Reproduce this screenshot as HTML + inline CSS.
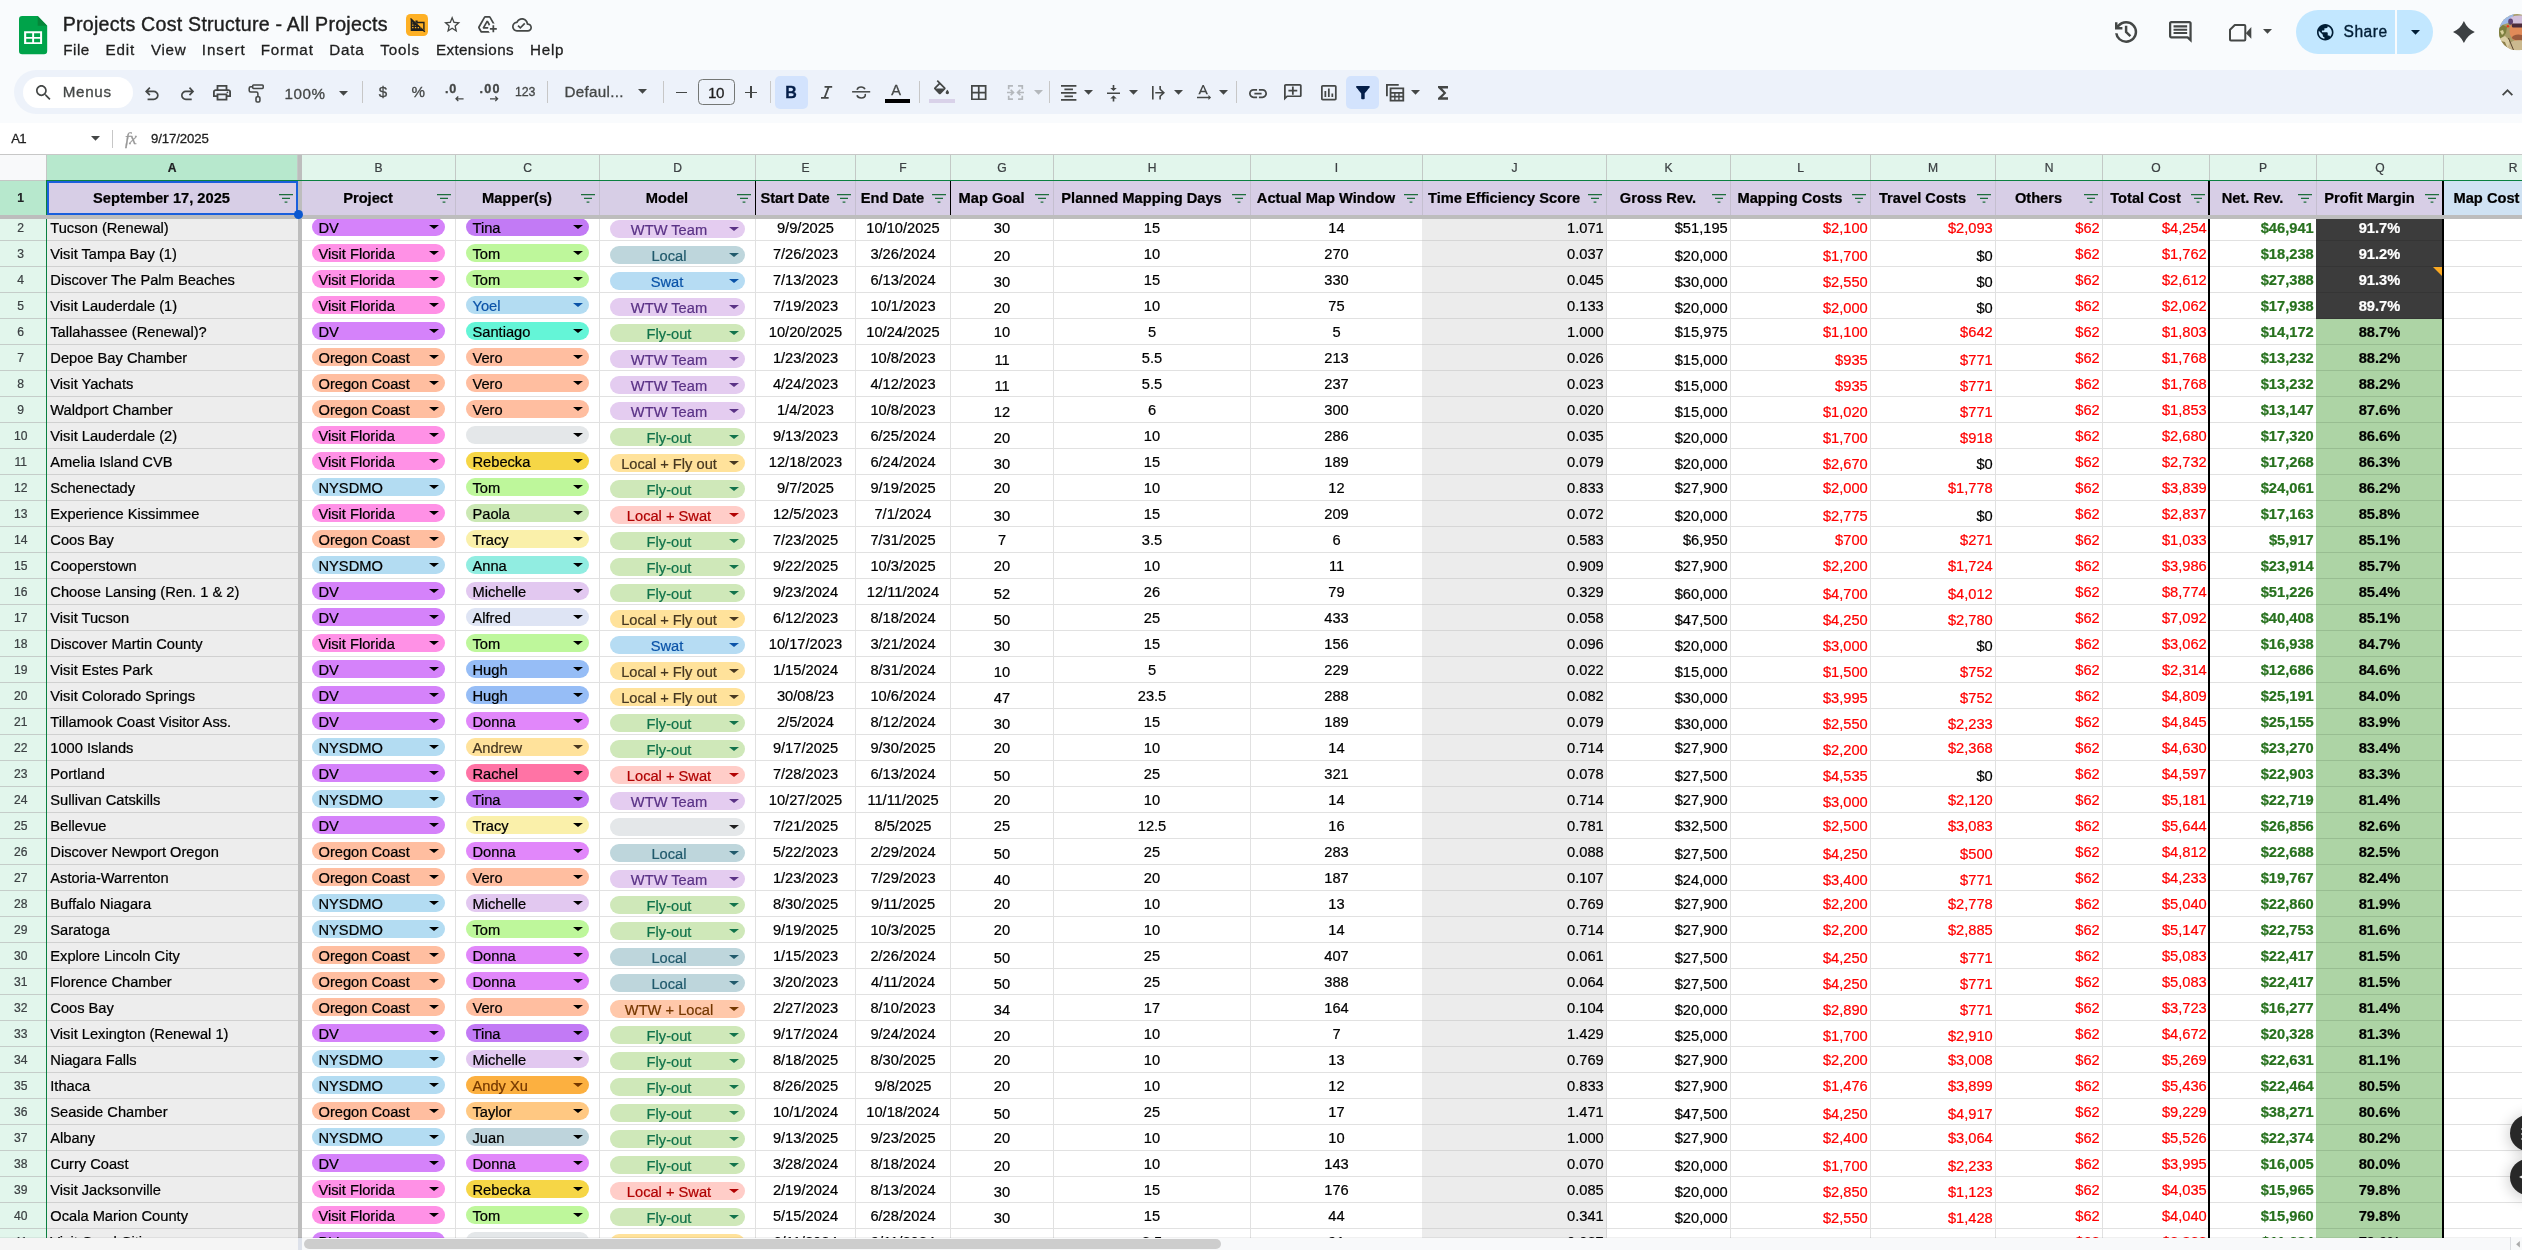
<!DOCTYPE html>
<html lang="en"><head><meta charset="utf-8"><title>Projects Cost Structure - All Projects - Google Sheets</title>
<style>
*{box-sizing:border-box}
html,body{margin:0;padding:0}
body{width:2522px;height:1250px;overflow:hidden;background:#f9fbfd;font-family:"Liberation Sans",Arial,sans-serif;color:#000}
#app{position:absolute;left:0;top:0;width:2522px;height:1250px;overflow:hidden;will-change:transform}
#grid{-webkit-text-stroke:.22px;position:absolute;left:0;top:0;width:2522px;height:1238px;overflow:hidden;clip-path:inset(154px 0 0 0);background:#fff}
.corner{position:absolute;left:0;top:155px;width:47px;height:26px;background:#f8f9fa;border-right:1px solid #c4c7c5;border-bottom:1px solid #c4c7c5}
.ch{position:absolute;top:155px;height:25px;background:#e2f6ec;border-right:1px solid #c3c9c6;font-size:12.1px;line-height:25px;text-align:center;color:#3c4043;padding-top:.5px}
.ch.sel{background:#b7e8cd;font-weight:bold;color:#202124}
.r1{position:absolute;left:0;top:181px;width:2522px;height:34px}
.r{position:absolute;left:0;width:2522px;height:26px;font-size:14.667px;line-height:25px;white-space:nowrap}
.rh{position:absolute;left:-4.6px;top:0;width:50.6px;height:100%;background:#e2f6ec;border-bottom:1px solid #c5cdc9;font-size:12.1px;text-align:center;color:#3c4043;line-height:27px}
.rh.sel{background:#b7e8cd;color:#202124;border-bottom:none}
.c{position:absolute;top:0;height:26px;border-right:1px solid #e1e1e1;border-bottom:1px solid #e1e1e1;background:#fff;padding:1px 3.3px 0}
.h{position:absolute;top:0;height:34px;background:#d7cee6;border-right:1px solid #c5bfd0;font-size:14.667px;font-weight:bold;line-height:34px;white-space:nowrap}
.h.hr{background:#cfe2f3}
.ht{position:absolute;left:0;right:21px;top:0;text-align:center}
.fi{position:absolute;right:4px;top:12.7px;width:14px;height:9px}
.c.cA{background:#ededed;border-bottom-color:#d0d0d0;border-right:none;overflow:hidden}
.c.cJ{background:#ececec;border-bottom-color:#d6d6d6;border-right-color:#d6d6d6}
.ce{text-align:center}
.c.ri{text-align:right;padding-right:2.3px}
.c.lo{padding-top:3.25px}
.red{color:#ff0000}
.m0{color:#000}
.grn{color:#27711e;font-weight:bold}
.c.cQ{background:#add4a5;font-weight:bold;border-bottom-color:#98bd91;border-right:none}
.c.cQ.dk{background:#3c3c3c;color:#fff;border-bottom-color:#353535}
.note{position:absolute;right:1px;top:0;width:0;height:0;border-left:9px solid transparent;border-top:9px solid #fba922}
.chip{position:absolute;left:10px;right:10px;top:2.85px;height:18.1px;border-radius:9.05px;line-height:18px;padding:1.2px 0 0 6.5px;color:#000}
.chip::after{content:"";position:absolute;right:6.4px;top:6.7px;border-left:5px solid transparent;border-right:5px solid transparent;border-top:4.9px solid currentColor}
.chip.cd{top:4.9px;text-align:center;padding:1px 17px 0 0}
.chip.cd::after{top:7.1px}
.pdv{background:#d582fa}.pvf{background:#ff91e6}.poc{background:#ffbea0}.pny{background:#b3dcf2}
.mtina{background:#c27af5}.mtom{background:#bef79b}.myoel{background:#b3dcf2;color:#0a53a8}.msan{background:#64f5d7}.mvero{background:#ffbea0}
.mnone{background:#e4e7e9}.mreb{background:#f6d646}.mpao{background:#cbe8b4}.mtra{background:#faf0aa}.manna{background:#91ede1}
.mmich{background:#e2c8f0}.malf{background:#dee4f4}.mhugh{background:#96bdf6}.mdon{background:#e187fa}.mandr{background:#ffe29b;color:#473821}
.mrach{background:#ff73a5}.mandy{background:#fcb040;color:#753800}.mtay{background:#ffc882}.mjuan{background:#bed4dc}
.dwtw{background:#e4ccf0;color:#5a3286}.dloc{background:#bed6dc;color:#215a6c}.dswat{background:#b6dcf3;color:#0a53a8;padding-right:21px!important}.dfly{background:#cfe8b9;color:#11734b}
.dlf{background:#ffe29b;color:#473821}.dls{background:#ffcdc8;color:#b10202}.dwl{background:#ffc8aa;color:#753800}.dnone{background:#e4e7e9;color:#1f1f1f}
.fzh{position:absolute;left:0;top:215px;width:2522px;height:4px;background:#bdbdbd;z-index:3}
.fzv{position:absolute;left:298px;top:155px;width:4px;height:1090px;background:#bdbdbd}
.gl{position:absolute;left:46px;top:180px;width:1px;height:1060px;background:#0a8040}
.gt{position:absolute;left:46px;top:180px;width:2480px;height:1px;background:#0a8040}
.gtop{position:absolute;left:0;top:154px;width:2522px;height:1px;background:#c7c7c7}
.bk1{position:absolute;left:2208px;top:181px;width:2px;height:1060px;background:#000}
.bk2{position:absolute;left:2442px;top:181px;width:2px;height:1060px;background:#000}
.bk3{position:absolute;left:755px;top:181px;width:1px;height:34px;background:#000}
.bk4{position:absolute;left:950px;top:181px;width:1px;height:34px;background:#000}
.selbox{z-index:4;position:absolute;left:47px;top:181px;width:251px;height:34px;border:2px solid #1a5fdc}
.selh{z-index:5;position:absolute;left:293.5px;top:209.5px;width:9.5px;height:9.5px;border-radius:50%;background:#0b57d0;border:0 solid #fff}
#bottom{position:absolute;left:0;top:1238px;width:2522px;height:12px;background:#f8f9fa;box-shadow:0 -1px 0 rgba(0,0,0,.06)}
.bl{position:absolute;left:0;top:0;width:298px;height:13px;background:#f5f5f5}
.bf{position:absolute;left:298px;top:0;width:4px;height:13px;background:#dde1ea}
.thumb{position:absolute;left:304px;top:1px;width:917px;height:10px;border-radius:5px;background:#cdcdcd}
.sarrow{position:absolute;left:2510px;top:-1px;width:12px;height:13px;border-left:1px solid #dadce0;background:#f8f9fa;padding:1px 0 0 4px}
.fab{position:absolute;left:2510px;width:36.600px;height:36.600px;border-radius:50%;background:#282828;box-shadow:0 2px 14px 2px rgba(0,0,0,.18)}
.i{position:absolute;display:block;overflow:visible}
.t{position:absolute;white-space:nowrap;-webkit-text-stroke:.3px}
.sep{position:absolute;width:1px;background:#c7c7c7}

.cA{left:47px;width:251px}
.cB{left:302px;width:154px}
.cC{left:456px;width:144px}
.cD{left:600px;width:156px}
.cE{left:756px;width:100px}
.cF{left:856px;width:95px}
.cG{left:951px;width:103px}
.cH{left:1054px;width:197px}
.cI{left:1251px;width:172px}
.cJ{left:1423px;width:184px}
.cK{left:1607px;width:124px}
.cL{left:1731px;width:140px}
.cM{left:1871px;width:125px}
.cN{left:1996px;width:107px}
.cO{left:2103px;width:107px}
.cP{left:2210px;width:107px}
.cQ{left:2317px;width:127px}
.cR{left:2444px;width:139px}
.c.cQ{left:2316px;width:127px}
.c.cJ{left:1422px;width:185px}
</style></head><body>
<div id="app">
<svg class="i" style="left:18.9px;top:16px;width:28.2px;height:38.2px" viewBox="0 0 28.2 38.2"><path d="M3.200 0h15.500l9.500 9.700v25.300a3.200 3.200 0 0 1-3.200 3.200H3.200A3.200 3.200 0 0 1 0 35V3.200A3.200 3.200 0 0 1 3.200 0z" fill="#00a34a"/><path d="M18.700 0l9.500 9.700h-9.500z" fill="#06863a"/><path d="M5.100 15.300h18v12.700h-18zM7.200 17.300v3.600h6v-3.600zM15.100 17.300v3.600h6v-3.600zM7.200 22.750v3.550h6v-3.550zM15.100 22.750v3.550h6v-3.550z" fill="#fff" fill-rule="evenodd"/></svg>
<span class="t" style="left:62.7px;top:12.5px;font-size:19.6px;line-height:22.52px;letter-spacing:0.246px;color:#1f1f1f;font-weight:normal;-webkit-text-stroke:.4px #1f1f1f;">Projects Cost Structure - All Projects</span>
<div style="position:absolute;left:406px;top:14px;width:22px;height:22px;border-radius:4.500px;background:#feb025"></div>
<svg class="i" style="left:409.7px;top:18.0px;width:15.3px;height:14.2px" viewBox="1.00 1.00 22.00 22.00" preserveAspectRatio="none"><path d="M1 2.400L2.400 1 23 21.600 21.600 23 19.600 21H2V3.400zM4 7.400V9h1.600zM4 11v2h2v-2zm0 4v2h2v-2zm4-4v2h1.600L8 11.400zm0 4v2h2v-2zm4 0v2h2v-2zm4 2h1.600l-1.600-1.600zM8.800 5H12v2h10v13.200l-2-2V9h-8v1.200L8.800 7z" fill="#1f1f1f"/></svg>
<svg class="i" style="left:443.7px;top:16.2px;width:16.3px;height:16.3px" viewBox="2.00 2.00 20.00 19.00" preserveAspectRatio="none"><path d="M22 9.24l-7.19-.62L12 2 9.19 8.63 2 9.24l5.46 4.73L5.82 21 12 17.27 18.18 21l-1.63-7.03L22 9.24zM12 15.4l-3.76 2.27 1-4.28-3.32-2.88 4.38-.38L12 6.1l1.71 4.04 4.38.38-3.32 2.88 1 4.28L12 15.4z" fill="#444746"/></svg>
<svg class="i" style="left:478.2px;top:16.2px;width:18.8px;height:16.8px" viewBox="1.30 2.50 21.70 19.00" preserveAspectRatio="none"><path d="M20 21v-3h3v-2h-3v-3h-2v3h-3v2h3v3h2zm-4.97.5H5.66c-.72 0-1.38-.38-1.73-1L1.57 16.4c-.36-.62-.35-1.38.01-2L7.92 3.49c.36-.61 1.02-.99 1.73-.99h4.7c.71 0 1.37.38 1.73.99l4.48 7.71c-.5-.13-1.02-.2-1.56-.2-.28 0-.56.02-.84.06L14.35 4.5h-4.7L3.31 15.41l2.35 4.09h7.89c.35.77.85 1.45 1.48 2zM13.34 15c-.22.63-.34 1.3-.34 2H7.25l-.73-1.27 4.58-7.98h1.8l2.53 4.42c-.56.42-1.05.93-1.44 1.51l-2-3.49L9.25 15h4.09z" fill="#444746"/></svg>
<svg class="i" style="left:512.3px;top:18.0px;width:20.0px;height:13.7px" viewBox="0.00 4.00 24.00 16.00" preserveAspectRatio="none"><path d="M19.35 10.04C18.67 6.59 15.64 4 12 4 9.11 4 6.6 5.64 5.35 8.04 2.34 8.36 0 10.91 0 14c0 3.31 2.69 6 6 6h13c2.76 0 5-2.24 5-5 0-2.64-2.05-4.78-4.65-4.96zM19 18H6c-2.21 0-4-1.79-4-4 0-2.05 1.53-3.76 3.56-3.97l1.07-.11.5-.95C8.08 7.14 9.94 6 12 6c2.62 0 4.88 1.86 5.39 4.43l.3 1.5 1.53.11c1.56.1 2.78 1.41 2.78 2.96 0 1.65-1.35 3-3 3zm-9-3.82l-2.09-2.09L6.5 13.5 10 17l6.01-6.01-1.41-1.41z" fill="#444746"/></svg>
<span class="t" style="left:63.3px;top:41.0px;font-size:15.2px;line-height:17.46px;letter-spacing:0.503px;color:#1f1f1f;font-weight:normal;">File</span>
<span class="t" style="left:105.6px;top:41.0px;font-size:15.2px;line-height:17.46px;letter-spacing:0.836px;color:#1f1f1f;font-weight:normal;">Edit</span>
<span class="t" style="left:150.9px;top:41.0px;font-size:15.2px;line-height:17.46px;letter-spacing:0.710px;color:#1f1f1f;font-weight:normal;">View</span>
<span class="t" style="left:201.7px;top:41.0px;font-size:15.2px;line-height:17.46px;letter-spacing:0.997px;color:#1f1f1f;font-weight:normal;">Insert</span>
<span class="t" style="left:260.7px;top:41.0px;font-size:15.2px;line-height:17.46px;letter-spacing:0.812px;color:#1f1f1f;font-weight:normal;">Format</span>
<span class="t" style="left:329.2px;top:41.0px;font-size:15.2px;line-height:17.46px;letter-spacing:0.798px;color:#1f1f1f;font-weight:normal;">Data</span>
<span class="t" style="left:380.3px;top:41.0px;font-size:15.2px;line-height:17.46px;letter-spacing:0.829px;color:#1f1f1f;font-weight:normal;">Tools</span>
<span class="t" style="left:436.0px;top:41.0px;font-size:15.2px;line-height:17.46px;letter-spacing:0.361px;color:#1f1f1f;font-weight:normal;">Extensions</span>
<span class="t" style="left:530.1px;top:41.0px;font-size:15.2px;line-height:17.46px;letter-spacing:0.746px;color:#1f1f1f;font-weight:normal;">Help</span>
<svg class="i" style="left:2114.7px;top:21.0px;width:22.2px;height:21.9px" viewBox="3.00 3.00 18.00 18.00" preserveAspectRatio="none"><path d="M12 21q-3.450 0-6.013-2.288T3.050 13H5.100q.350 2.600 2.313 4.300T12 19q2.925 0 4.963-2.038T19 12t-2.038-4.963T12 5q-1.725 0-3.225.800T6.250 8H9v2H3V4h2v2.350q1.275-1.600 3.113-2.475T12 3q1.875 0 3.513.713t2.850 1.924 1.925 2.850T21 12t-.712 3.513-1.925 2.850-2.850 1.925T12 21m2.800-4.800L11 12.400V7h2v4.600l3.200 3.200z" fill="#444746"/></svg>
<svg class="i" style="left:2169.0px;top:21.4px;width:22.7px;height:21.8px" viewBox="2.00 2.00 20.00 20.00" preserveAspectRatio="none"><path d="M21.99 4c0-1.1-.89-2-1.99-2H4c-1.1 0-2 .9-2 2v12c0 1.1.9 2 2 2h14l4 4-.01-18zM20 4v13.17L18.83 16H4V4h16zM6 12h12v2H6zm0-3h12v2H6zm0-3h12v2H6z" fill="#444746"/></svg>
<svg class="i" style="left:2228.900px;top:23.900px;width:22.300px;height:17.400px" viewBox="0 0 22.3 17.4"><path d="M5.800 1H15.300a1 1 0 0 1 1 1V15.400a1 1 0 0 1-1 1H2a1 1 0 0 1-1-1V5.800Z" stroke="#444746" stroke-width="2" fill="none" stroke-linejoin="round"/><path d="M16.800 9.200L22.300 3v11.800z" fill="#444746"/></svg>
<svg class="i" style="left:2262.5px;top:29.3px;width:9.0px;height:4.8px" viewBox="7.00 10.00 10.00 5.00" preserveAspectRatio="none"><path d="M7 10l5 5 5-5z" fill="#444746"/></svg>
<div style="position:absolute;left:2296px;top:10px;width:137px;height:44px;border-radius:22px;background:#c2e7ff"></div>
<div style="position:absolute;left:2395px;top:10px;width:1.500px;height:44px;background:#f9fbfd"></div>
<svg class="i" style="left:2317.0px;top:23.5px;width:16.5px;height:16.5px" viewBox="2.00 2.00 20.00 20.00" preserveAspectRatio="none"><path d="M12 2C6.48 2 2 6.48 2 12s4.48 10 10 10 10-4.48 10-10S17.52 2 12 2zm-1 17.93c-3.95-.49-7-3.85-7-7.93 0-.62.08-1.21.21-1.79L9 15v1c0 1.1.9 2 2 2v1.93zm6.9-2.54c-.26-.81-1-1.39-1.9-1.39h-1v-3c0-.55-.45-1-1-1H8v-2h2c.55 0 1-.45 1-1V7h2c1.1 0 2-.9 2-2v-.41c2.93 1.19 5 4.06 5 7.41 0 2.08-.8 3.97-2.1 5.39z" fill="#001d35"/></svg>
<span class="t" style="left:2343.6px;top:22.8px;font-size:15.6px;line-height:17.92px;letter-spacing:0.468px;color:#001d35;font-weight:normal;-webkit-text-stroke:.35px #001d35;">Share</span>
<svg class="i" style="left:2410.5px;top:30.1px;width:9.0px;height:4.8px" viewBox="7.00 10.00 10.00 5.00" preserveAspectRatio="none"><path d="M7 10l5 5 5-5z" fill="#001d35"/></svg>
<svg class="i" style="left:2453.0px;top:21.0px;width:21.8px;height:22.0px" viewBox="1.00 1.00 22.00 22.00" preserveAspectRatio="none"><path d="M12 1Q15.300 8.700 23 12 15.300 15.300 12 23 8.700 15.300 1 12 8.700 8.700 12 1z" fill="#3c4043"/></svg>
<svg class="i" style="left:2499px;top:13.800px;width:36.300px;height:36.300px" viewBox="0 0 36.3 36.3"><defs><clipPath id="av"><circle cx="18.150" cy="18.150" r="18.150"/></clipPath></defs><g clip-path="url(#av)"><rect width="36.300" height="36.300" fill="#a89c68"/><path d="M0 0h15l-4 8.500-8 2.500-3 4z" fill="#9db9e8"/><path d="M0 14l4-3 4 2-1 6-3 4-4 2z" fill="#7d7f3f"/><path d="M1 17l3-1 1 3-2 2z" fill="#d8cf9a"/><path d="M0 25l6-3 4 4 2 10H0z" fill="#dccfa6"/><path d="M2 27l4 1 2 5-4 1z" fill="#8d7f4a"/><ellipse cx="19" cy="17" rx="8.500" ry="10.500" fill="#e08a58"/><ellipse cx="20" cy="6" rx="10" ry="4.600" fill="#d2bfdb"/><ellipse cx="11.600" cy="7.600" rx="2.400" ry="3.200" fill="#5f4373"/><circle cx="8.900" cy="12.300" r="1.300" fill="#e6391f"/><rect x="12.800" y="9.600" width="14" height="3.900" rx="1.600" fill="#4b2b3b"/><ellipse cx="19.500" cy="23.500" rx="6.500" ry="3" fill="#9a5a3c"/><path d="M8 36.300c1-7 5-10 11-10s11 3 13 10z" fill="#cbb98f"/><path d="M9.500 24l5 12" stroke="#5a4630" stroke-width="1" fill="none"/></g></svg>
<div style="position:absolute;left:14px;top:70px;width:2525px;height:44px;border-radius:22px;background:#edf2fa"></div>
<div style="position:absolute;left:23px;top:77px;width:110px;height:31px;border-radius:15.500px;background:#fff"></div>
<svg class="i" style="left:35.5px;top:84.6px;width:14.5px;height:15.0px" viewBox="3.00 3.00 17.49 17.49" preserveAspectRatio="none"><path d="M15.5 14h-.79l-.28-.27C15.41 12.59 16 11.11 16 9.5 16 5.91 13.09 3 9.5 3S3 5.91 3 9.5 5.91 16 9.5 16c1.61 0 3.09-.59 4.23-1.57l.27.28v.79l5 4.99L20.49 19l-4.99-5zm-6 0C7.01 14 5 11.99 5 9.5S7.01 5 9.5 5 14 7.01 14 9.500 11.990 14 9.500 14z" fill="#444746"/></svg>
<span class="t" style="left:62.8px;top:82.9px;font-size:15.2px;line-height:17.46px;letter-spacing:0.669px;color:#444746;font-weight:normal;">Menus</span>
<svg class="i" style="left:145.3px;top:86.8px;width:13.7px;height:13.2px" viewBox="4.00 4.00 16.00 15.00" preserveAspectRatio="none"><path d="M7 19v-2h7.1q1.575 0 2.737-1T18 13.500q0-1.500-1.163-2.500T14.100 10H7.800l2.600 2.600L9 14 4 9l5-5 1.400 1.400L7.800 8h6.300q2.425 0 4.162 1.575T20 13.500q0 2.350-1.738 3.925T14.100 19z" fill="#444746"/></svg>
<svg class="i" style="left:180.5px;top:86.8px;width:13.2px;height:13.2px" viewBox="4.00 4.00 16.00 15.00" preserveAspectRatio="none"><path d="M9.900 19q-2.425 0-4.163-1.575T4 13.500q0-2.350 1.737-3.925T9.900 8h6.300l-2.600-2.600L15 4l5 5-5 5-1.400-1.400 2.600-2.600H9.900q-1.575 0-2.737 1T6 13.500q0 1.500 1.163 2.500T9.900 17H17v2z" fill="#444746"/></svg>
<svg class="i" style="left:213.0px;top:84.8px;width:18.0px;height:15.4px" viewBox="2.00 3.00 20.00 18.00" preserveAspectRatio="none"><path d="M16 8V5H8v3H6V3h12v5zM18 12.500q.425 0 .713-.288T19 11.500t-.288-.712T18 10.500t-.712.288T17 11.500t.288.712.712.288M16 19v-4H8v4zm2 2H6v-4H2v-6q0-1.275.875-2.137T5 8h14q1.275 0 2.138.863T22 11v6h-4zm2-6v-4q0-.425-.288-.712T19 10H5q-.425 0-.712.288T4 11v4h2v-2h12v2z" fill="#444746"/></svg>
<svg class="i" style="left:246px;top:82px;width:20px;height:22px" viewBox="246 82 20 22" fill="none" stroke="#444746" stroke-width="1.550"><rect x="252.700" y="85" width="10.500" height="3.400" rx=".800"/><path d="M252 86.700H250.700a1.500 1.500 0 0 0-1.500 1.500V90.500a1.500 1.500 0 0 0 1.500 1.500H256.400a1.500 1.500 0 0 1 1.500 1.500V96.400"/><rect x="256" y="96.800" width="3.900" height="5.200" rx="1.200"/></svg>
<span class="t" style="left:284.6px;top:85.0px;font-size:15.2px;line-height:17.46px;letter-spacing:0.541px;color:#444746;font-weight:normal;">100%</span>
<svg class="i" style="left:339.0px;top:90.8px;width:9.0px;height:4.8px" viewBox="7.00 10.00 10.00 5.00" preserveAspectRatio="none"><path d="M7 10l5 5 5-5z" fill="#444746"/></svg>
<div class="sep" style="left:362px;top:81px;height:22px"></div>
<span class="t" style="left:378.8px;top:83.2px;font-size:15.2px;line-height:17.46px;letter-spacing:0.000px;color:#444746;font-weight:normal;">$</span>
<span class="t" style="left:411.6px;top:83.2px;font-size:15.2px;line-height:17.46px;letter-spacing:0.000px;color:#444746;font-weight:normal;">%</span>
<span class="t" style="left:444.9px;top:82.2px;font-size:12.6px;line-height:14.48px;letter-spacing:0.892px;color:#444746;font-weight:bold;">.0</span>
<svg class="i" style="left:455px;top:95.800px;width:8.600px;height:5.600px" viewBox="0 0 8.6 5.6"><path d="M8.600 2.800H1.200M3.300 .500L1 2.800l2.300 2.300" stroke="#444746" stroke-width="1.300" fill="none"/></svg>
<span class="t" style="left:479.5px;top:82.2px;font-size:12.6px;line-height:14.48px;letter-spacing:1.242px;color:#444746;font-weight:bold;">.00</span>
<svg class="i" style="left:489.500px;top:95.800px;width:8.600px;height:5.600px" viewBox="0 0 8.6 5.6"><path d="M0 2.800h7.400M5.300 .500L7.600 2.800 5.300 5.100" stroke="#444746" stroke-width="1.300" fill="none"/></svg>
<span class="t" style="left:514.9px;top:85.0px;font-size:12.4px;line-height:14.25px;letter-spacing:-0.045px;color:#444746;font-weight:normal;">123</span>
<div class="sep" style="left:547px;top:81px;height:22px"></div>
<span class="t" style="left:564.5px;top:83.1px;font-size:15.2px;line-height:17.46px;letter-spacing:0.312px;color:#444746;font-weight:normal;">Defaul...</span>
<svg class="i" style="left:638.0px;top:89.3px;width:9.0px;height:4.8px" viewBox="7.00 10.00 10.00 5.00" preserveAspectRatio="none"><path d="M7 10l5 5 5-5z" fill="#444746"/></svg>
<div class="sep" style="left:663px;top:81px;height:22px"></div>
<div style="position:absolute;left:675.800px;top:91.500px;width:11.700px;height:1.600px;background:#444746"></div>
<div style="position:absolute;left:698px;top:79px;width:37px;height:26px;border-radius:4.500px;border:1px solid #747775"></div>
<span class="t" style="left:708.1px;top:83.9px;font-size:15.2px;line-height:17.46px;letter-spacing:-0.507px;color:#1f1f1f;font-weight:normal;">10</span>
<div style="position:absolute;left:745.300px;top:91.500px;width:11.700px;height:1.600px;background:#444746"></div>
<div style="position:absolute;left:750.350px;top:86.450px;width:1.600px;height:11.700px;background:#444746"></div>
<div class="sep" style="left:770px;top:81px;height:22px"></div>
<div style="position:absolute;left:775px;top:76px;width:33px;height:33px;border-radius:5px;background:#d3e3fd"></div>
<span class="t" style="left:785.3px;top:83.6px;font-size:16px;line-height:18.38px;letter-spacing:0.000px;color:#041e49;font-weight:bold;">B</span>
<svg class="i" style="left:821px;top:86.200px;width:11.200px;height:12.900px" viewBox="6 4 12 14" preserveAspectRatio="none"><path d="M9.800 5H18M6 17H14.200M14.300 5L9.700 17" stroke="#444746" stroke-width="1.900" fill="none"/></svg>
<svg class="i" style="left:850px;top:84px;width:22px;height:17px" viewBox="850 84 22 17" fill="none" stroke="#444746" stroke-width="1.600"><path d="M852.100 91.800H870.200" stroke-width="1.500"/><path d="M857.300 89.900C857.200 88 858.900 87 861.100 87C863 87 864.400 87.800 864.900 89.200"/><path d="M857 95.300C857.500 97.100 859.100 97.950 861.300 97.950C863.700 97.950 865.300 96.900 865.300 95.100C865.300 94.700 865.200 94.400 865.100 94.100"/></svg>
<span class="t" style="left:891.3px;top:82.1px;font-size:14.6px;line-height:16.78px;letter-spacing:0.000px;color:#444746;font-weight:normal;">A</span>
<div style="position:absolute;left:885px;top:99px;width:25.300px;height:4px;background:#000"></div>
<div class="sep" style="left:919px;top:81px;height:22px"></div>
<svg class="i" style="left:934.0px;top:80.0px;width:15.0px;height:14.3px" viewBox="3.00 0.00 18.00 17.00" preserveAspectRatio="none"><path d="M16.56 8.94L7.62 0 6.21 1.41l2.38 2.38-5.15 5.15c-.59.59-.59 1.54 0 2.12l5.5 5.5c.29.29.68.44 1.06.44s.77-.15 1.06-.44l5.5-5.5c.59-.58.59-1.53 0-2.12zM5.21 10L10 5.21 14.79 10H5.21zM19 11.5s-2 2.17-2 3.5c0 1.1.9 2 2 2s2-.9 2-2c0-1.33-2-3.500-2-3.500z" fill="#444746"/></svg>
<div style="position:absolute;left:929px;top:99px;width:26px;height:4px;background:#d9d2e9"></div>
<svg class="i" style="left:970.8px;top:84.7px;width:15.5px;height:15.1px" viewBox="3.00 3.00 18.00 18.00" preserveAspectRatio="none"><path d="M3 3v18h18V3H3zm8 16H5v-6h6v6zm0-8H5V5h6v6zm8 8h-6v-6h6v6zm0-8h-6V5h6v6z" fill="#444746"/></svg>
<svg class="i" style="left:1007.0px;top:85.0px;width:17.0px;height:15.0px" viewBox="2.00 3.00 20.00 18.00" preserveAspectRatio="none"><path d="M3 3h6v2H5v3H3zM15 3h6v5h-2V5h-4zM3 16h2v3h4v2H3zM19 16h2v5h-6v-2h4zM2 11h5.200l-1.600-1.600L7 8l4 4-4 4-1.400-1.400L7.200 13H2zM22 11h-5.200l1.600-1.600L17 8l-4 4 4 4 1.400-1.400-1.600-1.600H22z" fill="#b4b8bc"/></svg>
<svg class="i" style="left:1033.5px;top:89.8px;width:9.0px;height:4.8px" viewBox="7.00 10.00 10.00 5.00" preserveAspectRatio="none"><path d="M7 10l5 5 5-5z" fill="#b4b8bc"/></svg>
<div class="sep" style="left:1049px;top:81px;height:22px"></div>
<svg class="i" style="left:1061.3px;top:85.0px;width:15.4px;height:15.7px" viewBox="3.00 3.00 18.00 18.00" preserveAspectRatio="none"><path d="M7 15v2h10v-2H7zm-4 6h18v-2H3v2zm0-8h18v-2H3v2zm4-6v2h10V7H7zM3 3v2h18V3H3z" fill="#444746"/></svg>
<svg class="i" style="left:1084.2px;top:89.8px;width:9.0px;height:4.8px" viewBox="7.00 10.00 10.00 5.00" preserveAspectRatio="none"><path d="M7 10l5 5 5-5z" fill="#444746"/></svg>
<svg class="i" style="left:1107.0px;top:84.7px;width:13.0px;height:16.6px" viewBox="4.00 1.00 16.00 22.00" preserveAspectRatio="none"><path d="M8 19h3v4h2v-4h3l-4-4-4 4zm8-14h-3V1h-2v4H8l4 4 4-4zM4 11v2h16v-2H4z" fill="#444746"/></svg>
<svg class="i" style="left:1129.2px;top:89.8px;width:9.0px;height:4.8px" viewBox="7.00 10.00 10.00 5.00" preserveAspectRatio="none"><path d="M7 10l5 5 5-5z" fill="#444746"/></svg>
<svg class="i" style="left:1152.0px;top:85.7px;width:13.0px;height:13.6px" viewBox="4.00 3.00 16.00 18.00" preserveAspectRatio="none"><path d="M4 3h2v18H4zM13 3h2v5h-2zM13 16h2v5h-2zM8 11h8.200l-2.600-2.600L15 7l5 5-5 5-1.400-1.400 2.600-2.600H8z" fill="#444746"/></svg>
<svg class="i" style="left:1174.2px;top:89.8px;width:9.0px;height:4.8px" viewBox="7.00 10.00 10.00 5.00" preserveAspectRatio="none"><path d="M7 10l5 5 5-5z" fill="#444746"/></svg>
<svg class="i" style="left:1196.7px;top:85.2px;width:14.1px;height:15.0px" viewBox="5.00 3.00 16.00 18.00" preserveAspectRatio="none"><path d="M21 18l-3-3v2H5v2h13v2l3-3zM9.5 11.8h5l.9 2.2h2.1L12.750 3h-1.500L6.500 14h2.100l.900-2.200zM12 4.980L13.870 10h-3.740L12 4.980z" fill="#444746"/></svg>
<svg class="i" style="left:1219.2px;top:89.8px;width:9.0px;height:4.8px" viewBox="7.00 10.00 10.00 5.00" preserveAspectRatio="none"><path d="M7 10l5 5 5-5z" fill="#444746"/></svg>
<div class="sep" style="left:1236px;top:81px;height:22px"></div>
<svg class="i" style="left:1249.0px;top:88.5px;width:18.0px;height:9.2px" viewBox="2.00 7.00 20.00 10.00" preserveAspectRatio="none"><path d="M3.9 12c0-1.71 1.39-3.100 3.100-3.100h4V7H7c-2.760 0-5 2.240-5 5s2.240 5 5 5h4v-1.900H7c-1.710 0-3.100-1.390-3.100-3.100zM8 13h8v-2H8v2zm9-6h-4v1.900h4c1.710 0 3.100 1.390 3.100 3.100s-1.390 3.100-3.100 3.100h-4V17h4c2.760 0 5-2.240 5-5s-2.240-5-5-5z" fill="#444746"/></svg>
<svg class="i" style="left:1284.0px;top:84.3px;width:17.7px;height:16.4px" viewBox="2.00 2.00 20.00 20.00" preserveAspectRatio="none"><path d="M2 4c0-1.100.900-2 2-2h16c1.100 0 2 .900 2 2v12c0 1.100-.900 2-2 2H6l-4 4V4zm2 13.170L5.170 16H20V4H4v13.170zM11 5h2v4h4v2h-4v4h-2v-4H7V9h4z" fill="#444746"/></svg>
<svg class="i" style="left:1320.5px;top:84.8px;width:15.7px;height:15.4px" viewBox="3.00 3.00 18.00 18.00" preserveAspectRatio="none"><path d="M9 17H7v-7h2v7zm4 0h-2V7h2v10zm4 0h-2v-4h2v4zm2 2H5V5h14v14zm0-16H5c-1.100 0-2 .900-2 2v14c0 1.100.900 2 2 2h14c1.100 0 2-.900 2-2V5c0-1.100-.900-2-2-2z" fill="#444746"/></svg>
<div style="position:absolute;left:1346px;top:76px;width:33px;height:33px;border-radius:5px;background:#d3e3fd"></div>
<svg class="i" style="left:1355.8px;top:85.7px;width:13.9px;height:13.3px" viewBox="4.04 4.00 15.91 16.00" preserveAspectRatio="none"><path d="M4.250 5.610C6.270 8.200 10 13 10 13v6c0 .550.450 1 1 1h2c.550 0 1-.450 1-1v-6s3.720-4.800 5.740-7.390A.998.998 0 0 0 18.950 4H5.040c-.830 0-1.300.950-.790 1.610z" fill="#041e49"/></svg>
<svg class="i" style="left:1385.8px;top:83.5px;width:18.2px;height:17.5px" viewBox="2.00 2.00 20.00 20.00" preserveAspectRatio="none"><path d="M2 2h14v2H4v12H2zM6 6h16v16H6zM8 8v3h12V8zM8 13v2.500h3V13zM12.500 13v2.500h3V13zM17 13v2.500h3V13zM8 17.500V20h3v-2.500zM12.500 17.500V20h3v-2.500zM17 17.500V20h3v-2.500z" fill="#444746"/></svg>
<svg class="i" style="left:1410.8px;top:89.8px;width:9.0px;height:4.8px" viewBox="7.00 10.00 10.00 5.00" preserveAspectRatio="none"><path d="M7 10l5 5 5-5z" fill="#444746"/></svg>
<svg class="i" style="left:1438.3px;top:86.0px;width:10.0px;height:13.8px" viewBox="6.00 4.00 12.00 16.00" preserveAspectRatio="none"><path d="M18 4H6v2l6.500 6L6 18v2h12v-3h-7l5-5-5-5h7z" fill="#444746"/></svg>
<svg class="i" style="left:2502.0px;top:89.0px;width:11.0px;height:6.7px" viewBox="6.00 8.00 12.00 7.41" preserveAspectRatio="none"><path d="M12 8l-6 6 1.410 1.410L12 10.830l4.590 4.580L18 14z" fill="#444746"/></svg>
<div style="position:absolute;left:0;top:123px;width:2522px;height:32px;background:#fff"></div>
<span class="t" style="left:11.2px;top:130.9px;font-size:13.2px;line-height:15.17px;letter-spacing:-0.646px;color:#1f1f1f;font-weight:normal;">A1</span>
<svg class="i" style="left:91.0px;top:135.8px;width:9.0px;height:4.8px" viewBox="7.00 10.00 10.00 5.00" preserveAspectRatio="none"><path d="M7 10l5 5 5-5z" fill="#444746"/></svg>
<div class="sep" style="left:112px;top:130px;height:18px;background:#c7c7c7"></div>
<span class="t" style="left:125px;top:129px;font-family:'Liberation Serif',serif;font-style:italic;font-size:17px;line-height:20px;color:#989898;letter-spacing:-.5px;-webkit-text-stroke:.3px #989898">fx</span>
<span class="t" style="left:151.1px;top:130.7px;font-size:13.2px;line-height:15.17px;letter-spacing:-0.115px;color:#1f1f1f;font-weight:normal;">9/17/2025</span>
<div id="grid">
<div class="corner"></div>
<div class="ch sel cA">A</div>
<div class="ch cB">B</div>
<div class="ch cC">C</div>
<div class="ch cD">D</div>
<div class="ch cE">E</div>
<div class="ch cF">F</div>
<div class="ch cG">G</div>
<div class="ch cH">H</div>
<div class="ch cI">I</div>
<div class="ch cJ">J</div>
<div class="ch cK">K</div>
<div class="ch cL">L</div>
<div class="ch cM">M</div>
<div class="ch cN">N</div>
<div class="ch cO">O</div>
<div class="ch cP">P</div>
<div class="ch cQ">Q</div>
<div class="ch cR">R</div>
<div class="r1">
<div class="rh sel" style="line-height:34px"><b>1</b></div>
<div class="h cA"><span class="ht">September 17, 2025</span><svg class="fi" viewBox="0 0 14 9"><path d="M0 .7h14M3 4.4h8M5.6 8.1h2.8" stroke="#1e6e3c" stroke-width="1.25" fill="none"/></svg></div>
<div class="h cB"><span class="ht">Project</span><svg class="fi" viewBox="0 0 14 9"><path d="M0 .7h14M3 4.4h8M5.6 8.1h2.8" stroke="#1e6e3c" stroke-width="1.25" fill="none"/></svg></div>
<div class="h cC"><span class="ht">Mapper(s)</span><svg class="fi" viewBox="0 0 14 9"><path d="M0 .7h14M3 4.4h8M5.6 8.1h2.8" stroke="#1e6e3c" stroke-width="1.25" fill="none"/></svg></div>
<div class="h cD"><span class="ht">Model</span><svg class="fi" viewBox="0 0 14 9"><path d="M0 .7h14M3 4.4h8M5.6 8.1h2.8" stroke="#1e6e3c" stroke-width="1.25" fill="none"/></svg></div>
<div class="h cE"><span class="ht">Start Date</span><svg class="fi" viewBox="0 0 14 9"><path d="M0 .7h14M3 4.4h8M5.6 8.1h2.8" stroke="#1e6e3c" stroke-width="1.25" fill="none"/></svg></div>
<div class="h cF"><span class="ht">End Date</span><svg class="fi" viewBox="0 0 14 9"><path d="M0 .7h14M3 4.4h8M5.6 8.1h2.8" stroke="#1e6e3c" stroke-width="1.25" fill="none"/></svg></div>
<div class="h cG"><span class="ht">Map Goal</span><svg class="fi" viewBox="0 0 14 9"><path d="M0 .7h14M3 4.4h8M5.6 8.1h2.8" stroke="#1e6e3c" stroke-width="1.25" fill="none"/></svg></div>
<div class="h cH"><span class="ht">Planned Mapping Days</span><svg class="fi" viewBox="0 0 14 9"><path d="M0 .7h14M3 4.4h8M5.6 8.1h2.8" stroke="#1e6e3c" stroke-width="1.25" fill="none"/></svg></div>
<div class="h cI"><span class="ht">Actual Map Window</span><svg class="fi" viewBox="0 0 14 9"><path d="M0 .7h14M3 4.4h8M5.6 8.1h2.8" stroke="#1e6e3c" stroke-width="1.25" fill="none"/></svg></div>
<div class="h cJ"><span class="ht">Time Efficiency Score</span><svg class="fi" viewBox="0 0 14 9"><path d="M0 .7h14M3 4.4h8M5.6 8.1h2.8" stroke="#1e6e3c" stroke-width="1.25" fill="none"/></svg></div>
<div class="h cK"><span class="ht">Gross Rev.</span><svg class="fi" viewBox="0 0 14 9"><path d="M0 .7h14M3 4.4h8M5.6 8.1h2.8" stroke="#1e6e3c" stroke-width="1.25" fill="none"/></svg></div>
<div class="h cL"><span class="ht">Mapping Costs</span><svg class="fi" viewBox="0 0 14 9"><path d="M0 .7h14M3 4.4h8M5.6 8.1h2.8" stroke="#1e6e3c" stroke-width="1.25" fill="none"/></svg></div>
<div class="h cM"><span class="ht">Travel Costs</span><svg class="fi" viewBox="0 0 14 9"><path d="M0 .7h14M3 4.4h8M5.6 8.1h2.8" stroke="#1e6e3c" stroke-width="1.25" fill="none"/></svg></div>
<div class="h cN"><span class="ht">Others</span><svg class="fi" viewBox="0 0 14 9"><path d="M0 .7h14M3 4.4h8M5.6 8.1h2.8" stroke="#1e6e3c" stroke-width="1.25" fill="none"/></svg></div>
<div class="h cO"><span class="ht">Total Cost</span><svg class="fi" viewBox="0 0 14 9"><path d="M0 .7h14M3 4.4h8M5.6 8.1h2.8" stroke="#1e6e3c" stroke-width="1.25" fill="none"/></svg></div>
<div class="h cP"><span class="ht">Net. Rev.</span><svg class="fi" viewBox="0 0 14 9"><path d="M0 .7h14M3 4.4h8M5.6 8.1h2.8" stroke="#1e6e3c" stroke-width="1.25" fill="none"/></svg></div>
<div class="h cQ"><span class="ht">Profit Margin</span><svg class="fi" viewBox="0 0 14 9"><path d="M0 .7h14M3 4.4h8M5.6 8.1h2.8" stroke="#1e6e3c" stroke-width="1.25" fill="none"/></svg></div>
<div class="h cR hr"><span class="ht" style="text-align:left;padding-left:9.5px">Map Cost</span></div>
</div>
<div class="r" style="top:215px"><div class="rh">2</div><div class="c cA">Tucson (Renewal)</div><div class="c cB"><span class="chip pdv">DV</span></div><div class="c cC"><span class="chip mtina">Tina</span></div><div class="c cD"><span class="chip cd dwtw">WTW Team</span></div><div class="c cE ce">9/9/2025</div><div class="c cF ce">10/10/2025</div><div class="c cG ce">30</div><div class="c cH ce">15</div><div class="c cI ce">14</div><div class="c cJ ri">1.071</div><div class="c cK ri">$51,195</div><div class="c cL ri red">$2,100</div><div class="c cM ri red">$2,093</div><div class="c cN ri red">$62</div><div class="c cO ri red">$4,254</div><div class="c cP ri grn">$46,941</div><div class="c cQ ce dk">91.7%</div><div class="c cR"></div></div>
<div class="r" style="top:241px"><div class="rh">3</div><div class="c cA">Visit Tampa Bay (1)</div><div class="c cB"><span class="chip pvf">Visit Florida</span></div><div class="c cC"><span class="chip mtom">Tom</span></div><div class="c cD"><span class="chip cd dloc">Local</span></div><div class="c cE ce">7/26/2023</div><div class="c cF ce">3/26/2024</div><div class="c cG ce lo">20</div><div class="c cH ce">10</div><div class="c cI ce">270</div><div class="c cJ ri">0.037</div><div class="c cK ri lo">$20,000</div><div class="c cL ri red lo">$1,700</div><div class="c cM ri m0 lo">$0</div><div class="c cN ri red">$62</div><div class="c cO ri red">$1,762</div><div class="c cP ri grn">$18,238</div><div class="c cQ ce dk">91.2%</div><div class="c cR"></div></div>
<div class="r" style="top:267px"><div class="rh">4</div><div class="c cA">Discover The Palm Beaches</div><div class="c cB"><span class="chip pvf">Visit Florida</span></div><div class="c cC"><span class="chip mtom">Tom</span></div><div class="c cD"><span class="chip cd dswat">Swat</span></div><div class="c cE ce">7/13/2023</div><div class="c cF ce">6/13/2024</div><div class="c cG ce lo">30</div><div class="c cH ce">15</div><div class="c cI ce">330</div><div class="c cJ ri">0.045</div><div class="c cK ri lo">$30,000</div><div class="c cL ri red lo">$2,550</div><div class="c cM ri m0 lo">$0</div><div class="c cN ri red">$62</div><div class="c cO ri red">$2,612</div><div class="c cP ri grn">$27,388</div><div class="c cQ ce dk">91.3%<i class="note"></i></div><div class="c cR"></div></div>
<div class="r" style="top:293px"><div class="rh">5</div><div class="c cA">Visit Lauderdale (1)</div><div class="c cB"><span class="chip pvf">Visit Florida</span></div><div class="c cC"><span class="chip myoel">Yoel</span></div><div class="c cD"><span class="chip cd dwtw">WTW Team</span></div><div class="c cE ce">7/19/2023</div><div class="c cF ce">10/1/2023</div><div class="c cG ce lo">20</div><div class="c cH ce">10</div><div class="c cI ce">75</div><div class="c cJ ri">0.133</div><div class="c cK ri lo">$20,000</div><div class="c cL ri red lo">$2,000</div><div class="c cM ri m0 lo">$0</div><div class="c cN ri red">$62</div><div class="c cO ri red">$2,062</div><div class="c cP ri grn">$17,938</div><div class="c cQ ce dk">89.7%</div><div class="c cR"></div></div>
<div class="r" style="top:319px"><div class="rh">6</div><div class="c cA">Tallahassee (Renewal)?</div><div class="c cB"><span class="chip pdv">DV</span></div><div class="c cC"><span class="chip msan">Santiago</span></div><div class="c cD"><span class="chip cd dfly">Fly-out</span></div><div class="c cE ce">10/20/2025</div><div class="c cF ce">10/24/2025</div><div class="c cG ce">10</div><div class="c cH ce">5</div><div class="c cI ce">5</div><div class="c cJ ri">1.000</div><div class="c cK ri">$15,975</div><div class="c cL ri red">$1,100</div><div class="c cM ri red">$642</div><div class="c cN ri red">$62</div><div class="c cO ri red">$1,803</div><div class="c cP ri grn">$14,172</div><div class="c cQ ce">88.7%</div><div class="c cR"></div></div>
<div class="r" style="top:345px"><div class="rh">7</div><div class="c cA">Depoe Bay Chamber</div><div class="c cB"><span class="chip poc">Oregon Coast</span></div><div class="c cC"><span class="chip mvero">Vero</span></div><div class="c cD"><span class="chip cd dwtw">WTW Team</span></div><div class="c cE ce">1/23/2023</div><div class="c cF ce">10/8/2023</div><div class="c cG ce lo">11</div><div class="c cH ce">5.5</div><div class="c cI ce">213</div><div class="c cJ ri">0.026</div><div class="c cK ri lo">$15,000</div><div class="c cL ri red lo">$935</div><div class="c cM ri red lo">$771</div><div class="c cN ri red">$62</div><div class="c cO ri red">$1,768</div><div class="c cP ri grn">$13,232</div><div class="c cQ ce">88.2%</div><div class="c cR"></div></div>
<div class="r" style="top:371px"><div class="rh">8</div><div class="c cA">Visit Yachats</div><div class="c cB"><span class="chip poc">Oregon Coast</span></div><div class="c cC"><span class="chip mvero">Vero</span></div><div class="c cD"><span class="chip cd dwtw">WTW Team</span></div><div class="c cE ce">4/24/2023</div><div class="c cF ce">4/12/2023</div><div class="c cG ce lo">11</div><div class="c cH ce">5.5</div><div class="c cI ce">237</div><div class="c cJ ri">0.023</div><div class="c cK ri lo">$15,000</div><div class="c cL ri red lo">$935</div><div class="c cM ri red lo">$771</div><div class="c cN ri red">$62</div><div class="c cO ri red">$1,768</div><div class="c cP ri grn">$13,232</div><div class="c cQ ce">88.2%</div><div class="c cR"></div></div>
<div class="r" style="top:397px"><div class="rh">9</div><div class="c cA">Waldport Chamber</div><div class="c cB"><span class="chip poc">Oregon Coast</span></div><div class="c cC"><span class="chip mvero">Vero</span></div><div class="c cD"><span class="chip cd dwtw">WTW Team</span></div><div class="c cE ce">1/4/2023</div><div class="c cF ce">10/8/2023</div><div class="c cG ce lo">12</div><div class="c cH ce">6</div><div class="c cI ce">300</div><div class="c cJ ri">0.020</div><div class="c cK ri lo">$15,000</div><div class="c cL ri red lo">$1,020</div><div class="c cM ri red lo">$771</div><div class="c cN ri red">$62</div><div class="c cO ri red">$1,853</div><div class="c cP ri grn">$13,147</div><div class="c cQ ce">87.6%</div><div class="c cR"></div></div>
<div class="r" style="top:423px"><div class="rh">10</div><div class="c cA">Visit Lauderdale (2)</div><div class="c cB"><span class="chip pvf">Visit Florida</span></div><div class="c cC"><span class="chip mnone"></span></div><div class="c cD"><span class="chip cd dfly">Fly-out</span></div><div class="c cE ce">9/13/2023</div><div class="c cF ce">6/25/2024</div><div class="c cG ce lo">20</div><div class="c cH ce">10</div><div class="c cI ce">286</div><div class="c cJ ri">0.035</div><div class="c cK ri lo">$20,000</div><div class="c cL ri red lo">$1,700</div><div class="c cM ri red lo">$918</div><div class="c cN ri red">$62</div><div class="c cO ri red">$2,680</div><div class="c cP ri grn">$17,320</div><div class="c cQ ce">86.6%</div><div class="c cR"></div></div>
<div class="r" style="top:449px"><div class="rh">11</div><div class="c cA">Amelia Island CVB</div><div class="c cB"><span class="chip pvf">Visit Florida</span></div><div class="c cC"><span class="chip mreb">Rebecka</span></div><div class="c cD"><span class="chip cd dlf">Local + Fly out</span></div><div class="c cE ce">12/18/2023</div><div class="c cF ce">6/24/2024</div><div class="c cG ce lo">30</div><div class="c cH ce">15</div><div class="c cI ce">189</div><div class="c cJ ri">0.079</div><div class="c cK ri lo">$20,000</div><div class="c cL ri red lo">$2,670</div><div class="c cM ri m0 lo">$0</div><div class="c cN ri red">$62</div><div class="c cO ri red">$2,732</div><div class="c cP ri grn">$17,268</div><div class="c cQ ce">86.3%</div><div class="c cR"></div></div>
<div class="r" style="top:475px"><div class="rh">12</div><div class="c cA">Schenectady</div><div class="c cB"><span class="chip pny">NYSDMO</span></div><div class="c cC"><span class="chip mtom">Tom</span></div><div class="c cD"><span class="chip cd dfly">Fly-out</span></div><div class="c cE ce">9/7/2025</div><div class="c cF ce">9/19/2025</div><div class="c cG ce">20</div><div class="c cH ce">10</div><div class="c cI ce">12</div><div class="c cJ ri">0.833</div><div class="c cK ri">$27,900</div><div class="c cL ri red">$2,000</div><div class="c cM ri red">$1,778</div><div class="c cN ri red">$62</div><div class="c cO ri red">$3,839</div><div class="c cP ri grn">$24,061</div><div class="c cQ ce">86.2%</div><div class="c cR"></div></div>
<div class="r" style="top:501px"><div class="rh">13</div><div class="c cA">Experience Kissimmee</div><div class="c cB"><span class="chip pvf">Visit Florida</span></div><div class="c cC"><span class="chip mpao">Paola</span></div><div class="c cD"><span class="chip cd dls">Local + Swat</span></div><div class="c cE ce">12/5/2023</div><div class="c cF ce">7/1/2024</div><div class="c cG ce lo">30</div><div class="c cH ce">15</div><div class="c cI ce">209</div><div class="c cJ ri">0.072</div><div class="c cK ri lo">$20,000</div><div class="c cL ri red lo">$2,775</div><div class="c cM ri m0 lo">$0</div><div class="c cN ri red">$62</div><div class="c cO ri red">$2,837</div><div class="c cP ri grn">$17,163</div><div class="c cQ ce">85.8%</div><div class="c cR"></div></div>
<div class="r" style="top:527px"><div class="rh">14</div><div class="c cA">Coos Bay</div><div class="c cB"><span class="chip poc">Oregon Coast</span></div><div class="c cC"><span class="chip mtra">Tracy</span></div><div class="c cD"><span class="chip cd dfly">Fly-out</span></div><div class="c cE ce">7/23/2025</div><div class="c cF ce">7/31/2025</div><div class="c cG ce">7</div><div class="c cH ce">3.5</div><div class="c cI ce">6</div><div class="c cJ ri">0.583</div><div class="c cK ri">$6,950</div><div class="c cL ri red">$700</div><div class="c cM ri red">$271</div><div class="c cN ri red">$62</div><div class="c cO ri red">$1,033</div><div class="c cP ri grn">$5,917</div><div class="c cQ ce">85.1%</div><div class="c cR"></div></div>
<div class="r" style="top:553px"><div class="rh">15</div><div class="c cA">Cooperstown</div><div class="c cB"><span class="chip pny">NYSDMO</span></div><div class="c cC"><span class="chip manna">Anna</span></div><div class="c cD"><span class="chip cd dfly">Fly-out</span></div><div class="c cE ce">9/22/2025</div><div class="c cF ce">10/3/2025</div><div class="c cG ce">20</div><div class="c cH ce">10</div><div class="c cI ce">11</div><div class="c cJ ri">0.909</div><div class="c cK ri">$27,900</div><div class="c cL ri red">$2,200</div><div class="c cM ri red">$1,724</div><div class="c cN ri red">$62</div><div class="c cO ri red">$3,986</div><div class="c cP ri grn">$23,914</div><div class="c cQ ce">85.7%</div><div class="c cR"></div></div>
<div class="r" style="top:579px"><div class="rh">16</div><div class="c cA">Choose Lansing (Ren. 1 &amp; 2)</div><div class="c cB"><span class="chip pdv">DV</span></div><div class="c cC"><span class="chip mmich">Michelle</span></div><div class="c cD"><span class="chip cd dfly">Fly-out</span></div><div class="c cE ce">9/23/2024</div><div class="c cF ce">12/11/2024</div><div class="c cG ce lo">52</div><div class="c cH ce">26</div><div class="c cI ce">79</div><div class="c cJ ri">0.329</div><div class="c cK ri lo">$60,000</div><div class="c cL ri red lo">$4,700</div><div class="c cM ri red lo">$4,012</div><div class="c cN ri red">$62</div><div class="c cO ri red">$8,774</div><div class="c cP ri grn">$51,226</div><div class="c cQ ce">85.4%</div><div class="c cR"></div></div>
<div class="r" style="top:605px"><div class="rh">17</div><div class="c cA">Visit Tucson</div><div class="c cB"><span class="chip pdv">DV</span></div><div class="c cC"><span class="chip malf">Alfred</span></div><div class="c cD"><span class="chip cd dlf">Local + Fly out</span></div><div class="c cE ce">6/12/2023</div><div class="c cF ce">8/18/2024</div><div class="c cG ce lo">50</div><div class="c cH ce">25</div><div class="c cI ce">433</div><div class="c cJ ri">0.058</div><div class="c cK ri lo">$47,500</div><div class="c cL ri red lo">$4,250</div><div class="c cM ri red lo">$2,780</div><div class="c cN ri red">$62</div><div class="c cO ri red">$7,092</div><div class="c cP ri grn">$40,408</div><div class="c cQ ce">85.1%</div><div class="c cR"></div></div>
<div class="r" style="top:631px"><div class="rh">18</div><div class="c cA">Discover Martin County</div><div class="c cB"><span class="chip pvf">Visit Florida</span></div><div class="c cC"><span class="chip mtom">Tom</span></div><div class="c cD"><span class="chip cd dswat">Swat</span></div><div class="c cE ce">10/17/2023</div><div class="c cF ce">3/21/2024</div><div class="c cG ce lo">30</div><div class="c cH ce">15</div><div class="c cI ce">156</div><div class="c cJ ri">0.096</div><div class="c cK ri lo">$20,000</div><div class="c cL ri red lo">$3,000</div><div class="c cM ri m0 lo">$0</div><div class="c cN ri red">$62</div><div class="c cO ri red">$3,062</div><div class="c cP ri grn">$16,938</div><div class="c cQ ce">84.7%</div><div class="c cR"></div></div>
<div class="r" style="top:657px"><div class="rh">19</div><div class="c cA">Visit Estes Park</div><div class="c cB"><span class="chip pdv">DV</span></div><div class="c cC"><span class="chip mhugh">Hugh</span></div><div class="c cD"><span class="chip cd dlf">Local + Fly out</span></div><div class="c cE ce">1/15/2024</div><div class="c cF ce">8/31/2024</div><div class="c cG ce lo">10</div><div class="c cH ce">5</div><div class="c cI ce">229</div><div class="c cJ ri">0.022</div><div class="c cK ri lo">$15,000</div><div class="c cL ri red lo">$1,500</div><div class="c cM ri red lo">$752</div><div class="c cN ri red">$62</div><div class="c cO ri red">$2,314</div><div class="c cP ri grn">$12,686</div><div class="c cQ ce">84.6%</div><div class="c cR"></div></div>
<div class="r" style="top:683px"><div class="rh">20</div><div class="c cA">Visit Colorado Springs</div><div class="c cB"><span class="chip pdv">DV</span></div><div class="c cC"><span class="chip mhugh">Hugh</span></div><div class="c cD"><span class="chip cd dlf">Local + Fly out</span></div><div class="c cE ce">30/08/23</div><div class="c cF ce">10/6/2024</div><div class="c cG ce lo">47</div><div class="c cH ce">23.5</div><div class="c cI ce">288</div><div class="c cJ ri">0.082</div><div class="c cK ri lo">$30,000</div><div class="c cL ri red lo">$3,995</div><div class="c cM ri red lo">$752</div><div class="c cN ri red">$62</div><div class="c cO ri red">$4,809</div><div class="c cP ri grn">$25,191</div><div class="c cQ ce">84.0%</div><div class="c cR"></div></div>
<div class="r" style="top:709px"><div class="rh">21</div><div class="c cA">Tillamook Coast Visitor Ass.</div><div class="c cB"><span class="chip pdv">DV</span></div><div class="c cC"><span class="chip mdon">Donna</span></div><div class="c cD"><span class="chip cd dfly">Fly-out</span></div><div class="c cE ce">2/5/2024</div><div class="c cF ce">8/12/2024</div><div class="c cG ce lo">30</div><div class="c cH ce">15</div><div class="c cI ce">189</div><div class="c cJ ri">0.079</div><div class="c cK ri lo">$30,000</div><div class="c cL ri red lo">$2,550</div><div class="c cM ri red lo">$2,233</div><div class="c cN ri red">$62</div><div class="c cO ri red">$4,845</div><div class="c cP ri grn">$25,155</div><div class="c cQ ce">83.9%</div><div class="c cR"></div></div>
<div class="r" style="top:735px"><div class="rh">22</div><div class="c cA">1000 Islands</div><div class="c cB"><span class="chip pny">NYSDMO</span></div><div class="c cC"><span class="chip mandr">Andrew</span></div><div class="c cD"><span class="chip cd dfly">Fly-out</span></div><div class="c cE ce">9/17/2025</div><div class="c cF ce">9/30/2025</div><div class="c cG ce">20</div><div class="c cH ce">10</div><div class="c cI ce">14</div><div class="c cJ ri">0.714</div><div class="c cK ri">$27,900</div><div class="c cL ri red lo">$2,200</div><div class="c cM ri red">$2,368</div><div class="c cN ri red">$62</div><div class="c cO ri red">$4,630</div><div class="c cP ri grn">$23,270</div><div class="c cQ ce">83.4%</div><div class="c cR"></div></div>
<div class="r" style="top:761px"><div class="rh">23</div><div class="c cA">Portland</div><div class="c cB"><span class="chip pdv">DV</span></div><div class="c cC"><span class="chip mrach">Rachel</span></div><div class="c cD"><span class="chip cd dls">Local + Swat</span></div><div class="c cE ce">7/28/2023</div><div class="c cF ce">6/13/2024</div><div class="c cG ce lo">50</div><div class="c cH ce">25</div><div class="c cI ce">321</div><div class="c cJ ri">0.078</div><div class="c cK ri lo">$27,500</div><div class="c cL ri red lo">$4,535</div><div class="c cM ri m0 lo">$0</div><div class="c cN ri red">$62</div><div class="c cO ri red">$4,597</div><div class="c cP ri grn">$22,903</div><div class="c cQ ce">83.3%</div><div class="c cR"></div></div>
<div class="r" style="top:787px"><div class="rh">24</div><div class="c cA">Sullivan Catskills</div><div class="c cB"><span class="chip pny">NYSDMO</span></div><div class="c cC"><span class="chip mtina">Tina</span></div><div class="c cD"><span class="chip cd dwtw">WTW Team</span></div><div class="c cE ce">10/27/2025</div><div class="c cF ce">11/11/2025</div><div class="c cG ce">20</div><div class="c cH ce">10</div><div class="c cI ce">14</div><div class="c cJ ri">0.714</div><div class="c cK ri">$27,900</div><div class="c cL ri red lo">$3,000</div><div class="c cM ri red">$2,120</div><div class="c cN ri red">$62</div><div class="c cO ri red">$5,181</div><div class="c cP ri grn">$22,719</div><div class="c cQ ce">81.4%</div><div class="c cR"></div></div>
<div class="r" style="top:813px"><div class="rh">25</div><div class="c cA">Bellevue</div><div class="c cB"><span class="chip pdv">DV</span></div><div class="c cC"><span class="chip mtra">Tracy</span></div><div class="c cD"><span class="chip cd dnone"></span></div><div class="c cE ce">7/21/2025</div><div class="c cF ce">8/5/2025</div><div class="c cG ce">25</div><div class="c cH ce">12.5</div><div class="c cI ce">16</div><div class="c cJ ri">0.781</div><div class="c cK ri">$32,500</div><div class="c cL ri red">$2,500</div><div class="c cM ri red">$3,083</div><div class="c cN ri red">$62</div><div class="c cO ri red">$5,644</div><div class="c cP ri grn">$26,856</div><div class="c cQ ce">82.6%</div><div class="c cR"></div></div>
<div class="r" style="top:839px"><div class="rh">26</div><div class="c cA">Discover Newport Oregon</div><div class="c cB"><span class="chip poc">Oregon Coast</span></div><div class="c cC"><span class="chip mdon">Donna</span></div><div class="c cD"><span class="chip cd dloc">Local</span></div><div class="c cE ce">5/22/2023</div><div class="c cF ce">2/29/2024</div><div class="c cG ce lo">50</div><div class="c cH ce">25</div><div class="c cI ce">283</div><div class="c cJ ri">0.088</div><div class="c cK ri lo">$27,500</div><div class="c cL ri red lo">$4,250</div><div class="c cM ri red lo">$500</div><div class="c cN ri red">$62</div><div class="c cO ri red">$4,812</div><div class="c cP ri grn">$22,688</div><div class="c cQ ce">82.5%</div><div class="c cR"></div></div>
<div class="r" style="top:865px"><div class="rh">27</div><div class="c cA">Astoria-Warrenton</div><div class="c cB"><span class="chip poc">Oregon Coast</span></div><div class="c cC"><span class="chip mvero">Vero</span></div><div class="c cD"><span class="chip cd dwtw">WTW Team</span></div><div class="c cE ce">1/23/2023</div><div class="c cF ce">7/29/2023</div><div class="c cG ce lo">40</div><div class="c cH ce">20</div><div class="c cI ce">187</div><div class="c cJ ri">0.107</div><div class="c cK ri lo">$24,000</div><div class="c cL ri red lo">$3,400</div><div class="c cM ri red lo">$771</div><div class="c cN ri red">$62</div><div class="c cO ri red">$4,233</div><div class="c cP ri grn">$19,767</div><div class="c cQ ce">82.4%</div><div class="c cR"></div></div>
<div class="r" style="top:891px"><div class="rh">28</div><div class="c cA">Buffalo Niagara</div><div class="c cB"><span class="chip pny">NYSDMO</span></div><div class="c cC"><span class="chip mmich">Michelle</span></div><div class="c cD"><span class="chip cd dfly">Fly-out</span></div><div class="c cE ce">8/30/2025</div><div class="c cF ce">9/11/2025</div><div class="c cG ce">20</div><div class="c cH ce">10</div><div class="c cI ce">13</div><div class="c cJ ri">0.769</div><div class="c cK ri">$27,900</div><div class="c cL ri red">$2,200</div><div class="c cM ri red">$2,778</div><div class="c cN ri red">$62</div><div class="c cO ri red">$5,040</div><div class="c cP ri grn">$22,860</div><div class="c cQ ce">81.9%</div><div class="c cR"></div></div>
<div class="r" style="top:917px"><div class="rh">29</div><div class="c cA">Saratoga</div><div class="c cB"><span class="chip pny">NYSDMO</span></div><div class="c cC"><span class="chip mtom">Tom</span></div><div class="c cD"><span class="chip cd dfly">Fly-out</span></div><div class="c cE ce">9/19/2025</div><div class="c cF ce">10/3/2025</div><div class="c cG ce">20</div><div class="c cH ce">10</div><div class="c cI ce">14</div><div class="c cJ ri">0.714</div><div class="c cK ri">$27,900</div><div class="c cL ri red">$2,200</div><div class="c cM ri red">$2,885</div><div class="c cN ri red">$62</div><div class="c cO ri red">$5,147</div><div class="c cP ri grn">$22,753</div><div class="c cQ ce">81.6%</div><div class="c cR"></div></div>
<div class="r" style="top:943px"><div class="rh">30</div><div class="c cA">Explore Lincoln City</div><div class="c cB"><span class="chip poc">Oregon Coast</span></div><div class="c cC"><span class="chip mdon">Donna</span></div><div class="c cD"><span class="chip cd dloc">Local</span></div><div class="c cE ce">1/15/2023</div><div class="c cF ce">2/26/2024</div><div class="c cG ce lo">50</div><div class="c cH ce">25</div><div class="c cI ce">407</div><div class="c cJ ri">0.061</div><div class="c cK ri lo">$27,500</div><div class="c cL ri red lo">$4,250</div><div class="c cM ri red lo">$771</div><div class="c cN ri red">$62</div><div class="c cO ri red">$5,083</div><div class="c cP ri grn">$22,417</div><div class="c cQ ce">81.5%</div><div class="c cR"></div></div>
<div class="r" style="top:969px"><div class="rh">31</div><div class="c cA">Florence Chamber</div><div class="c cB"><span class="chip poc">Oregon Coast</span></div><div class="c cC"><span class="chip mdon">Donna</span></div><div class="c cD"><span class="chip cd dloc">Local</span></div><div class="c cE ce">3/20/2023</div><div class="c cF ce">4/11/2024</div><div class="c cG ce lo">50</div><div class="c cH ce">25</div><div class="c cI ce">388</div><div class="c cJ ri">0.064</div><div class="c cK ri lo">$27,500</div><div class="c cL ri red lo">$4,250</div><div class="c cM ri red lo">$771</div><div class="c cN ri red">$62</div><div class="c cO ri red">$5,083</div><div class="c cP ri grn">$22,417</div><div class="c cQ ce">81.5%</div><div class="c cR"></div></div>
<div class="r" style="top:995px"><div class="rh">32</div><div class="c cA">Coos Bay</div><div class="c cB"><span class="chip poc">Oregon Coast</span></div><div class="c cC"><span class="chip mvero">Vero</span></div><div class="c cD"><span class="chip cd dwl">WTW + Local</span></div><div class="c cE ce">2/27/2023</div><div class="c cF ce">8/10/2023</div><div class="c cG ce lo">34</div><div class="c cH ce">17</div><div class="c cI ce">164</div><div class="c cJ ri">0.104</div><div class="c cK ri lo">$20,000</div><div class="c cL ri red lo">$2,890</div><div class="c cM ri red lo">$771</div><div class="c cN ri red">$62</div><div class="c cO ri red">$3,723</div><div class="c cP ri grn">$16,277</div><div class="c cQ ce">81.4%</div><div class="c cR"></div></div>
<div class="r" style="top:1021px"><div class="rh">33</div><div class="c cA">Visit Lexington (Renewal 1)</div><div class="c cB"><span class="chip pdv">DV</span></div><div class="c cC"><span class="chip mtina">Tina</span></div><div class="c cD"><span class="chip cd dfly">Fly-out</span></div><div class="c cE ce">9/17/2024</div><div class="c cF ce">9/24/2024</div><div class="c cG ce lo">20</div><div class="c cH ce">10</div><div class="c cI ce">7</div><div class="c cJ ri">1.429</div><div class="c cK ri lo">$25,000</div><div class="c cL ri red lo">$1,700</div><div class="c cM ri red lo">$2,910</div><div class="c cN ri red">$62</div><div class="c cO ri red">$4,672</div><div class="c cP ri grn">$20,328</div><div class="c cQ ce">81.3%</div><div class="c cR"></div></div>
<div class="r" style="top:1047px"><div class="rh">34</div><div class="c cA">Niagara Falls</div><div class="c cB"><span class="chip pny">NYSDMO</span></div><div class="c cC"><span class="chip mmich">Michelle</span></div><div class="c cD"><span class="chip cd dfly">Fly-out</span></div><div class="c cE ce">8/18/2025</div><div class="c cF ce">8/30/2025</div><div class="c cG ce">20</div><div class="c cH ce">10</div><div class="c cI ce">13</div><div class="c cJ ri">0.769</div><div class="c cK ri">$27,900</div><div class="c cL ri red">$2,200</div><div class="c cM ri red">$3,008</div><div class="c cN ri red">$62</div><div class="c cO ri red">$5,269</div><div class="c cP ri grn">$22,631</div><div class="c cQ ce">81.1%</div><div class="c cR"></div></div>
<div class="r" style="top:1073px"><div class="rh">35</div><div class="c cA">Ithaca</div><div class="c cB"><span class="chip pny">NYSDMO</span></div><div class="c cC"><span class="chip mandy">Andy Xu</span></div><div class="c cD"><span class="chip cd dfly">Fly-out</span></div><div class="c cE ce">8/26/2025</div><div class="c cF ce">9/8/2025</div><div class="c cG ce">20</div><div class="c cH ce">10</div><div class="c cI ce">12</div><div class="c cJ ri">0.833</div><div class="c cK ri">$27,900</div><div class="c cL ri red">$1,476</div><div class="c cM ri red">$3,899</div><div class="c cN ri red">$62</div><div class="c cO ri red">$5,436</div><div class="c cP ri grn">$22,464</div><div class="c cQ ce">80.5%</div><div class="c cR"></div></div>
<div class="r" style="top:1099px"><div class="rh">36</div><div class="c cA">Seaside Chamber</div><div class="c cB"><span class="chip poc">Oregon Coast</span></div><div class="c cC"><span class="chip mtay">Taylor</span></div><div class="c cD"><span class="chip cd dfly">Fly-out</span></div><div class="c cE ce">10/1/2024</div><div class="c cF ce">10/18/2024</div><div class="c cG ce lo">50</div><div class="c cH ce">25</div><div class="c cI ce">17</div><div class="c cJ ri">1.471</div><div class="c cK ri lo">$47,500</div><div class="c cL ri red lo">$4,250</div><div class="c cM ri red lo">$4,917</div><div class="c cN ri red">$62</div><div class="c cO ri red">$9,229</div><div class="c cP ri grn">$38,271</div><div class="c cQ ce">80.6%</div><div class="c cR"></div></div>
<div class="r" style="top:1125px"><div class="rh">37</div><div class="c cA">Albany</div><div class="c cB"><span class="chip pny">NYSDMO</span></div><div class="c cC"><span class="chip mjuan">Juan</span></div><div class="c cD"><span class="chip cd dfly">Fly-out</span></div><div class="c cE ce">9/13/2025</div><div class="c cF ce">9/23/2025</div><div class="c cG ce">20</div><div class="c cH ce">10</div><div class="c cI ce">10</div><div class="c cJ ri">1.000</div><div class="c cK ri">$27,900</div><div class="c cL ri red">$2,400</div><div class="c cM ri red">$3,064</div><div class="c cN ri red">$62</div><div class="c cO ri red">$5,526</div><div class="c cP ri grn">$22,374</div><div class="c cQ ce">80.2%</div><div class="c cR"></div></div>
<div class="r" style="top:1151px"><div class="rh">38</div><div class="c cA">Curry Coast</div><div class="c cB"><span class="chip pdv">DV</span></div><div class="c cC"><span class="chip mdon">Donna</span></div><div class="c cD"><span class="chip cd dfly">Fly-out</span></div><div class="c cE ce">3/28/2024</div><div class="c cF ce">8/18/2024</div><div class="c cG ce lo">20</div><div class="c cH ce">10</div><div class="c cI ce">143</div><div class="c cJ ri">0.070</div><div class="c cK ri lo">$20,000</div><div class="c cL ri red lo">$1,700</div><div class="c cM ri red lo">$2,233</div><div class="c cN ri red">$62</div><div class="c cO ri red">$3,995</div><div class="c cP ri grn">$16,005</div><div class="c cQ ce">80.0%</div><div class="c cR"></div></div>
<div class="r" style="top:1177px"><div class="rh">39</div><div class="c cA">Visit Jacksonville</div><div class="c cB"><span class="chip pvf">Visit Florida</span></div><div class="c cC"><span class="chip mreb">Rebecka</span></div><div class="c cD"><span class="chip cd dls">Local + Swat</span></div><div class="c cE ce">2/19/2024</div><div class="c cF ce">8/13/2024</div><div class="c cG ce lo">30</div><div class="c cH ce">15</div><div class="c cI ce">176</div><div class="c cJ ri">0.085</div><div class="c cK ri lo">$20,000</div><div class="c cL ri red lo">$2,850</div><div class="c cM ri red lo">$1,123</div><div class="c cN ri red">$62</div><div class="c cO ri red">$4,035</div><div class="c cP ri grn">$15,965</div><div class="c cQ ce">79.8%</div><div class="c cR"></div></div>
<div class="r" style="top:1203px"><div class="rh">40</div><div class="c cA">Ocala Marion County</div><div class="c cB"><span class="chip pvf">Visit Florida</span></div><div class="c cC"><span class="chip mtom">Tom</span></div><div class="c cD"><span class="chip cd dfly">Fly-out</span></div><div class="c cE ce">5/15/2024</div><div class="c cF ce">6/28/2024</div><div class="c cG ce lo">30</div><div class="c cH ce">15</div><div class="c cI ce">44</div><div class="c cJ ri">0.341</div><div class="c cK ri lo">$20,000</div><div class="c cL ri red lo">$2,550</div><div class="c cM ri red lo">$1,428</div><div class="c cN ri red">$62</div><div class="c cO ri red">$4,040</div><div class="c cP ri grn">$15,960</div><div class="c cQ ce">79.8%</div><div class="c cR"></div></div>
<div class="r" style="top:1229px"><div class="rh">41</div><div class="c cA">Visit Coral Cities</div><div class="c cB"><span class="chip pdv">DV</span></div><div class="c cC"><span class="chip mnone"></span></div><div class="c cD"><span class="chip cd dlf">Local + Fly out</span></div><div class="c cE ce">6/11/2024</div><div class="c cF ce">9/11/2024</div><div class="c cG ce lo">5</div><div class="c cH ce">2.5</div><div class="c cI ce">91</div><div class="c cJ ri">0.027</div><div class="c cK ri lo">$11,000</div><div class="c cL ri red lo">$425</div><div class="c cM ri red lo">$62</div><div class="c cN ri red">$62</div><div class="c cO ri red">$2,322</div><div class="c cP ri grn">$11,684</div><div class="c cQ ce">79.0%</div><div class="c cR"></div></div>
<div class="fzh"></div><div class="fzv"></div><div class="gl"></div><div class="gt"></div><div class="gtop"></div>
<div class="bk1"></div><div class="bk2"></div><div class="bk3"></div><div class="bk4"></div>
<div class="selbox"></div><div class="selh"></div>
</div>
<div id="bottom"><div class="bl"></div><div class="bf"></div><div class="thumb"></div><div class="sarrow"><svg viewBox="0 0 4 7" width="4" height="6.500" style="position:absolute;left:5px;top:4px"><path d="M4 0v7L0 3.500z" fill="#aaa"/></svg></div></div>
<div class="fab" style="top:1114.500px"><i style="position:absolute;left:10.500px;top:13.500px;width:3px;height:2px;background:#8f8f8f"></i><i style="position:absolute;left:10.500px;top:18.500px;width:3px;height:2px;background:#8f8f8f"></i><i style="position:absolute;left:10.500px;top:23.500px;width:3px;height:2px;background:#8f8f8f"></i></div>
<div class="fab" style="top:1158.700px"><svg viewBox="0 0 6 6" width="6" height="6" style="position:absolute;left:9px;top:15.300px"><path d="M0 3L6 0v6z" fill="#f1f1f1"/></svg></div>
</div>
</body></html>
